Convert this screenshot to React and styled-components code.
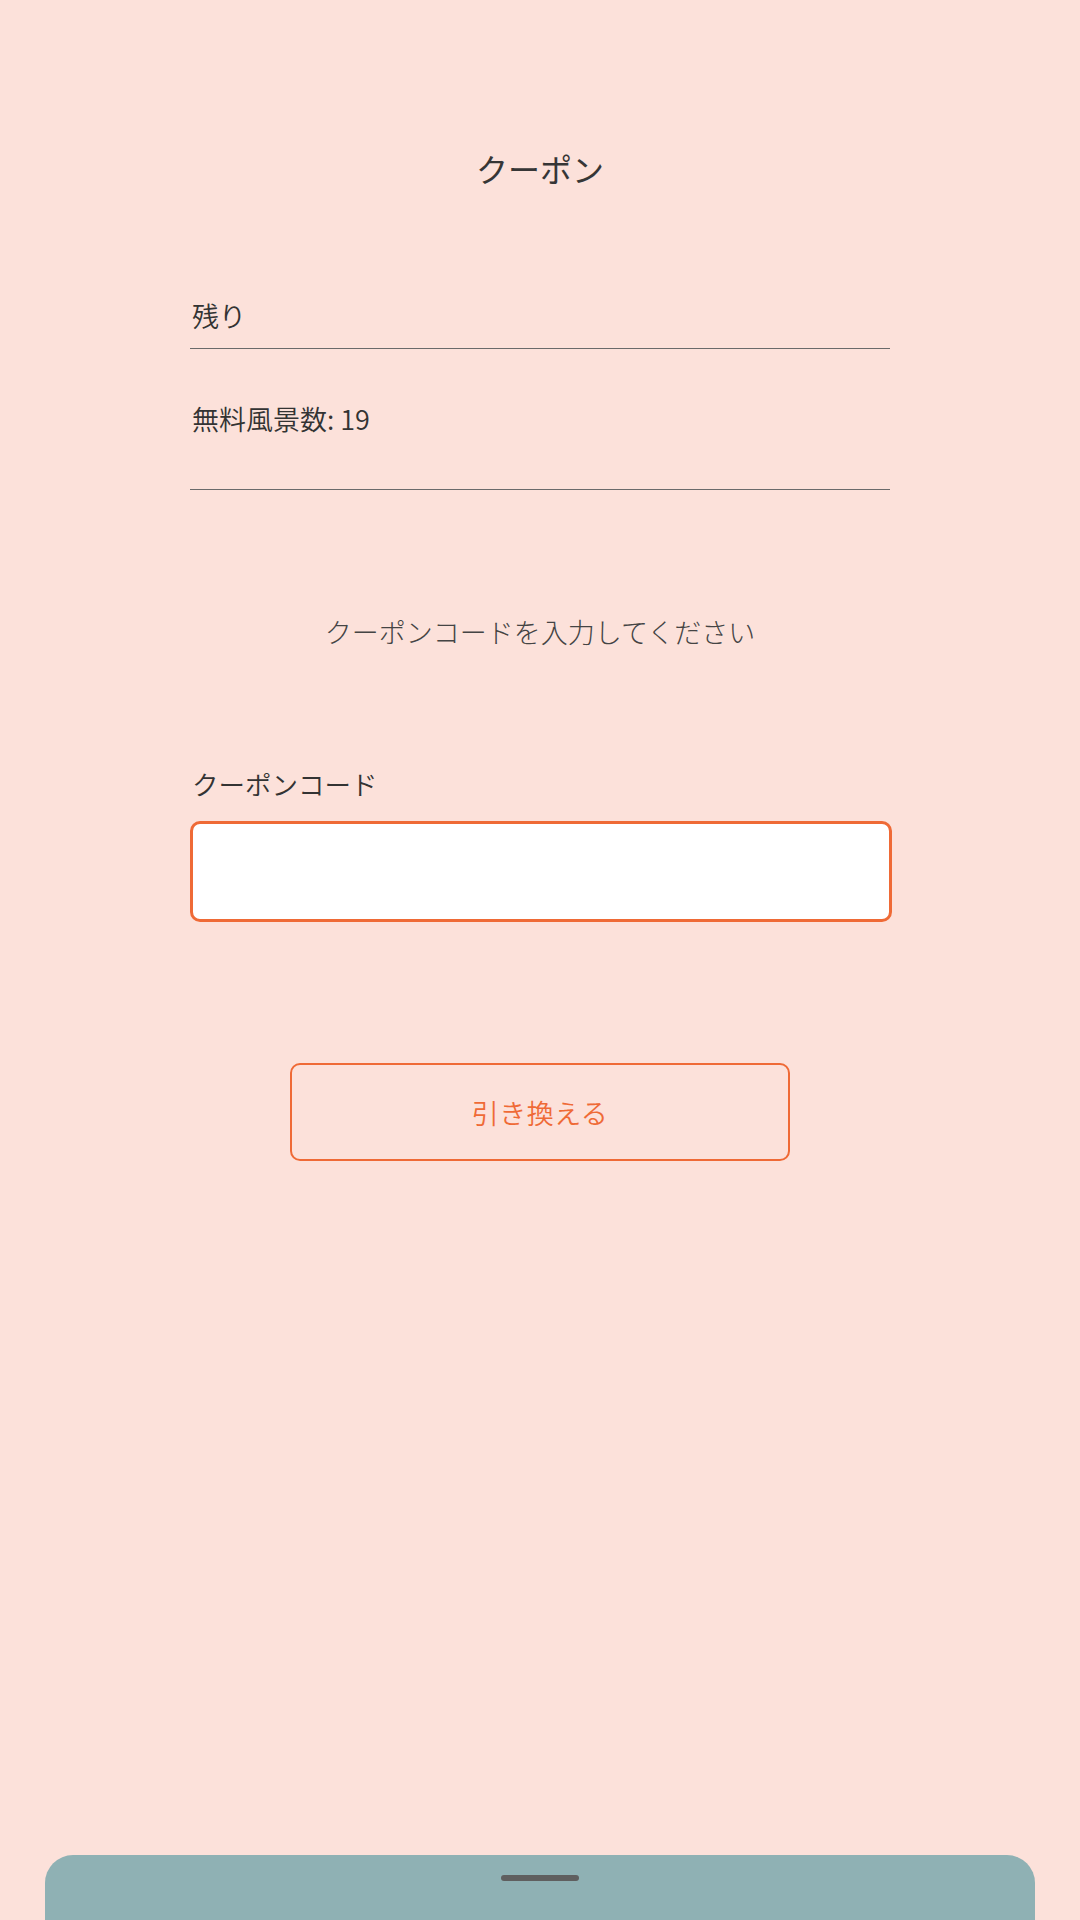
import styled, { createGlobalStyle } from "styled-components";

const GlobalStyle = createGlobalStyle`
  html, body {
    margin: 0;
    padding: 0;
    background: #fce1da;
  }
  body {
    font-family: "Noto Sans CJK JP", "Noto Sans", sans-serif;
    color: #333;
  }
`;

const Screen = styled.div`
  width: 1080px;
  height: 1920px;
  background: #fce1da;
  display: flex;
  flex-direction: column;
  overflow: hidden;
`;

const Content = styled.main`
  flex: 1;
  display: flex;
  flex-direction: column;
  padding: 0 190px;
`;

const Title = styled.h1`
  margin: 143px 0 0;
  font-size: 32px;
  font-weight: 400;
  line-height: 50px;
  text-align: center;
  color: #363636;
`;

const InfoRow = styled.div`
  border-bottom: 1.5px solid #6a6a6a;
  padding: ${(p) => p.$pad};
  font-size: 27px;
  font-weight: 350;
  line-height: 40px;
  color: #333;
`;

const Hint = styled.p`
  margin: 122px 0 0;
  font-size: 27px;
  font-weight: 300;
  line-height: 40px;
  text-align: center;
  color: #444;
`;

const Label = styled.label`
  margin: 112px 0 0 2px;
  font-size: 26.5px;
  font-weight: 350;
  line-height: 40px;
  color: #333;
`;

const Input = styled.input`
  box-sizing: border-box;
  margin-top: 17px;
  width: 702px;
  height: 101px;
  border: 3px solid #ef6a36;
  border-radius: 10px;
  background: #fff;
  outline: none;
  font-size: 27px;
  padding: 0 20px;
`;

const Redeem = styled.button`
  box-sizing: border-box;
  align-self: center;
  margin-top: 141px;
  width: 500px;
  height: 98px;
  border: 2px solid #ef6a36;
  border-radius: 10px;
  background: transparent;
  color: #ef6a36;
  font-family: inherit;
  font-size: 27px;
  font-weight: 350;
  letter-spacing: 0.5px;
  cursor: pointer;
`;

const Sheet = styled.div`
  margin: 0 45px;
  height: 65px;
  background: #8fb1b4;
  border-radius: 28px 28px 0 0;
  display: flex;
  justify-content: center;
  padding-top: 20px;
  box-sizing: border-box;
`;

const Handle = styled.div`
  width: 78px;
  height: 6px;
  border-radius: 3px;
  background: #5f5f5f;
`;

export default function App() {
  return (
    <Screen>
      <GlobalStyle />
      <Content>
        <Title>クーポン</Title>
        <InfoRow $pad="103px 0 12px 2px">残り</InfoRow>
        <InfoRow $pad="50px 0 50px 2px">無料風景数: 19</InfoRow>
        <Hint>クーポンコードを入力してください</Hint>
        <Label htmlFor="coupon">クーポンコード</Label>
        <Input id="coupon" type="text" />
        <Redeem type="button">引き換える</Redeem>
      </Content>
      <Sheet>
        <Handle />
      </Sheet>
    </Screen>
  );
}
